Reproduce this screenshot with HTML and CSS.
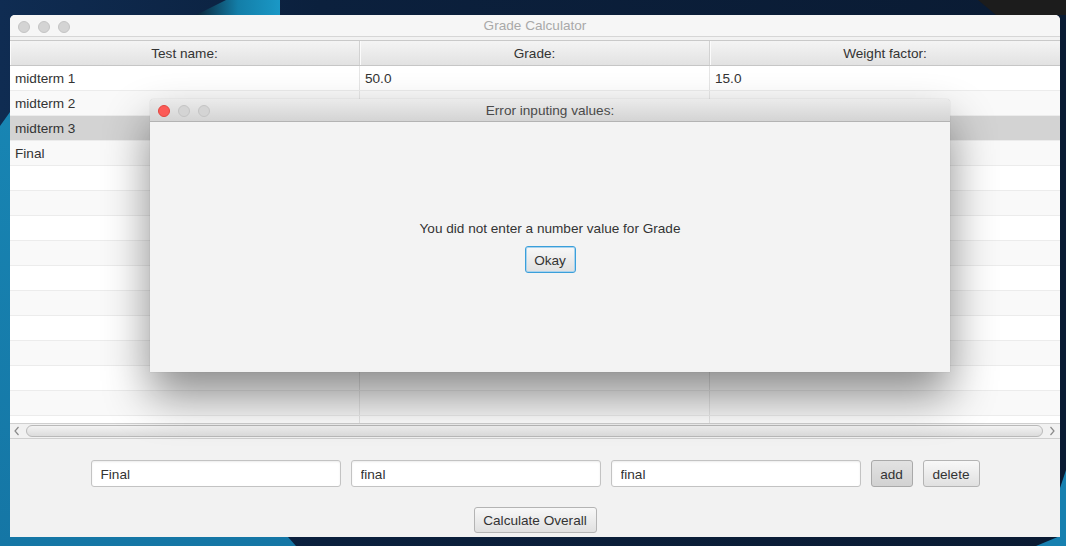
FILE: index.html
```html
<!DOCTYPE html>
<html>
<head>
<meta charset="utf-8">
<title>Grade Calculator</title>
<link rel="stylesheet" href="styles.css">
</head>
<body>
<div class="wallpaper">
  <svg width="1066" height="546" viewBox="0 0 1066 546">
    <defs>
      <linearGradient id="streak" x1="0" y1="0" x2="1" y2="0">
        <stop offset="0" stop-color="#0b2438"/>
        <stop offset="0.5" stop-color="#137ea8"/>
        <stop offset="1" stop-color="#1a98c6"/>
      </linearGradient>
      <linearGradient id="leftblue" x1="0" y1="0" x2="0" y2="1">
        <stop offset="0" stop-color="#1885b3"/>
        <stop offset="1" stop-color="#1576a5"/>
      </linearGradient>
      <linearGradient id="navy" x1="0" y1="0" x2="1" y2="0">
        <stop offset="0" stop-color="#0f2c52"/>
        <stop offset="0.3" stop-color="#0b203d"/>
        <stop offset="1" stop-color="#0a1b33"/>
      </linearGradient>
    </defs>
    <rect width="1066" height="546" fill="url(#navy)"/>
    <polygon points="226,0 280,0 280,15 196,15" fill="url(#streak)"/>
    <polygon points="978,0 1066,0 1066,15 996,15" fill="#1c1c1c"/>
    <polygon points="0,126 10,112 10,537 288,537 296,546 0,546" fill="url(#leftblue)"/>
    <polygon points="1060,488 1066,470 1066,546 1036,546 1060,536" fill="#1780b0"/>
  </svg>
</div>

<div class="window">
  <div class="titlebar">
    <div class="lights">
      <span class="light"></span><span class="light"></span><span class="light"></span>
    </div>
    <div class="title">Grade Calculator</div>
  </div>

  <div class="table">
    <div class="thead">
      <div class="th">Test name:</div>
      <div class="th">Grade:</div>
      <div class="th">Weight factor:</div>
    </div>
    <div class="tbody">
      <div class="row"><div class="td">midterm 1</div><div class="td">50.0</div><div class="td">15.0</div></div>
      <div class="row odd"><div class="td">midterm 2</div><div class="td">90.0</div><div class="td">15.0</div></div>
      <div class="row selected"><div class="td">midterm 3</div><div class="td">80.0</div><div class="td">15.0</div></div>
      <div class="row odd"><div class="td">Final</div><div class="td">70.0</div><div class="td">55.0</div></div>
      <div class="row"><div class="td"></div><div class="td"></div><div class="td"></div></div>
      <div class="row odd"><div class="td"></div><div class="td"></div><div class="td"></div></div>
      <div class="row"><div class="td"></div><div class="td"></div><div class="td"></div></div>
      <div class="row odd"><div class="td"></div><div class="td"></div><div class="td"></div></div>
      <div class="row"><div class="td"></div><div class="td"></div><div class="td"></div></div>
      <div class="row odd"><div class="td"></div><div class="td"></div><div class="td"></div></div>
      <div class="row"><div class="td"></div><div class="td"></div><div class="td"></div></div>
      <div class="row odd"><div class="td"></div><div class="td"></div><div class="td"></div></div>
      <div class="row"><div class="td"></div><div class="td"></div><div class="td"></div></div>
      <div class="row odd"><div class="td"></div><div class="td"></div><div class="td"></div></div>
      <div class="row"><div class="td"></div><div class="td"></div><div class="td"></div></div>
    </div>
    <div class="hscroll">
      <svg class="arrow" width="8" height="10" viewBox="0 0 8 10"><polyline points="5.5,1 2,5 5.5,9" fill="none" stroke="#8a8a8a" stroke-width="1.2"/></svg>
      <div class="thumb"></div>
      <svg class="arrow" width="8" height="10" viewBox="0 0 8 10"><polyline points="2.5,1 6,5 2.5,9" fill="none" stroke="#8a8a8a" stroke-width="1.2"/></svg>
    </div>
  </div>

  <div class="controls">
    <div class="input-row">
      <input class="field" type="text" value="Final">
      <input class="field" type="text" value="final">
      <input class="field" type="text" value="final">
      <button class="btn hover add">add</button>
      <button class="btn del">delete</button>
    </div>
    <div class="calc-row">
      <button class="btn calc">Calculate Overall</button>
    </div>
  </div>
</div>

<div class="dialog">
  <div class="titlebar dialog-bar">
    <div class="lights">
      <span class="light close"></span><span class="light"></span><span class="light"></span>
    </div>
    <div class="title dark">Error inputing values:</div>
  </div>
  <div class="dialog-body">
    <div class="message">You did not enter a number value for Grade</div>
    <button class="btn okay">Okay</button>
  </div>
</div>
</body>
</html>
```

FILE: styles.css
```css
* { box-sizing: border-box; }

html, body {
  margin: 0;
  padding: 0;
  width: 1066px;
  height: 546px;
  overflow: hidden;
}

body {
  font-family: "Liberation Sans", Arial, sans-serif;
  font-size: 13.6px;
  color: #333;
  background: #0b1f3b;
  padding: 15px 0 0 10px;
}

.wallpaper {
  position: fixed;
  left: 0;
  top: 0;
  width: 1066px;
  height: 546px;
  z-index: 0;
}
.wallpaper svg { display: block; }

.window {
  position: relative;
  z-index: 1;
  width: 1050px;
  height: 522px;
  background: #f2f2f2;
  border-radius: 5px 5px 0 0;
  display: flex;
  flex-direction: column;
  overflow: hidden;
}

.titlebar {
  position: relative;
  height: 22px;
  flex: none;
  background: #f6f6f6;
  border-bottom: 1px solid #d6d6d6;
  display: flex;
  align-items: center;
  justify-content: center;
}
.lights {
  position: absolute;
  left: 8px;
  top: 6px;
  display: flex;
  gap: 8px;
}
.light {
  width: 12px;
  height: 12px;
  border-radius: 50%;
  background: #d4d4d4;
  border: 1px solid #c4c4c4;
}
.light.close {
  background: #fc5b57;
  border-color: #e2463f;
}
.title {
  color: #a9a9a9;
  font-size: 13.6px;
  line-height: 22px;
  padding-top: 1px;
}
.title.dark { color: #4a4a4a; }

.table {
  margin-top: 3px;
  display: flex;
  flex-direction: column;
  border-top: 1px solid #c9c9c9;
}
.thead {
  height: 25px;
  display: grid;
  grid-template-columns: 350px 350px 350px;
  background: linear-gradient(#f4f4f4, #e2e2e2);
  border-bottom: 1px solid #c6c6c6;
}
.th {
  display: flex;
  align-items: center;
  justify-content: center;
  padding-top: 1px;
  color: #333;
  border-right: 1px solid #d2d2d2;
  box-shadow: inset 1px 0 #fbfbfb;
}
.th:last-child { border-right: none; }

.tbody {
  height: 357px;
  overflow: hidden;
  background: #ffffff;
}
.row {
  height: 25px;
  display: grid;
  grid-template-columns: 350px 350px 350px;
  background: #ffffff;
  border-bottom: 1px solid #ececec;
}
.row.odd { background: #f9f9f9; }
.row.selected { background: #d3d3d3; }
.td {
  display: flex;
  align-items: center;
  padding-left: 5px;
  padding-top: 1px;
  border-right: 1px solid #e6e6e6;
  color: #333;
}
.td:last-child { border-right: none; }

.hscroll {
  height: 16px;
  background: #f1f1f1;
  border-top: 1px solid #cfcfcf;
  border-bottom: 1px solid #cfcfcf;
  display: flex;
  align-items: center;
  padding: 0 3px 0 2px;
  gap: 4px;
}
.hscroll .arrow { flex: none; margin: 0 1px; }
.thumb {
  flex: 1;
  height: 12px;
  border-radius: 6px;
  border: 1px solid #b9b9b9;
  background: linear-gradient(#f3f3f3, #dcdcdc);
}

.controls {
  flex: 1;
  display: flex;
  flex-direction: column;
  align-items: center;
  padding-top: 21px;
}
.input-row {
  display: flex;
  gap: 10px;
  align-items: center;
}
.field {
  width: 250px;
  height: 27px;
  border: 1px solid #c3c3c3;
  border-radius: 3px;
  background: #ffffff;
  box-shadow: inset 0 1px 2px rgba(0,0,0,0.08);
  padding: 1px 9px 0;
  font-family: "Liberation Sans", Arial, sans-serif;
  font-size: 13.6px;
  color: #333;
  outline: none;
}
.btn {
  height: 27px;
  padding: 1px 0 0;
  border: 1px solid #b4b4b4;
  border-radius: 3px;
  background: linear-gradient(#f8f8f8, #e0e0e0);
  font-family: "Liberation Sans", Arial, sans-serif;
  font-size: 13.6px;
  color: #333;
}
.btn.add { width: 42px; }
.btn.del { width: 57px; }
.btn.hover {
  background: linear-gradient(#e2e2e2, #d2d2d2);
  border-color: #a9a9a9;
}
.calc-row {
  margin-top: 20px;
}
.btn.calc {
  height: 26px;
  width: 123px;
}

.dialog {
  position: absolute;
  z-index: 2;
  left: 150px;
  top: 99px;
  width: 800px;
  height: 273px;
  background: #f3f3f3;
  border-radius: 4px 4px 0 0;
  box-shadow: 0 24px 46px rgba(0,0,0,0.45), 0 0 1px rgba(0,0,0,0.3);
  display: flex;
  flex-direction: column;
}
.dialog-bar {
  height: 23px;
  border-radius: 4px 4px 0 0;
  background: linear-gradient(#ebebeb, #d4d4d4);
  border-bottom: 1px solid #b3b3b3;
}
.dialog-body {
  flex: 1;
  display: flex;
  flex-direction: column;
  align-items: center;
  justify-content: center;
  gap: 10px;
}
.message { color: #333; }
.btn.okay {
  height: 27px;
  width: 51px;
  border: 1px solid #3a9fda;
  box-shadow: inset 0 0 0 1px #a9d3ee;
}
```
